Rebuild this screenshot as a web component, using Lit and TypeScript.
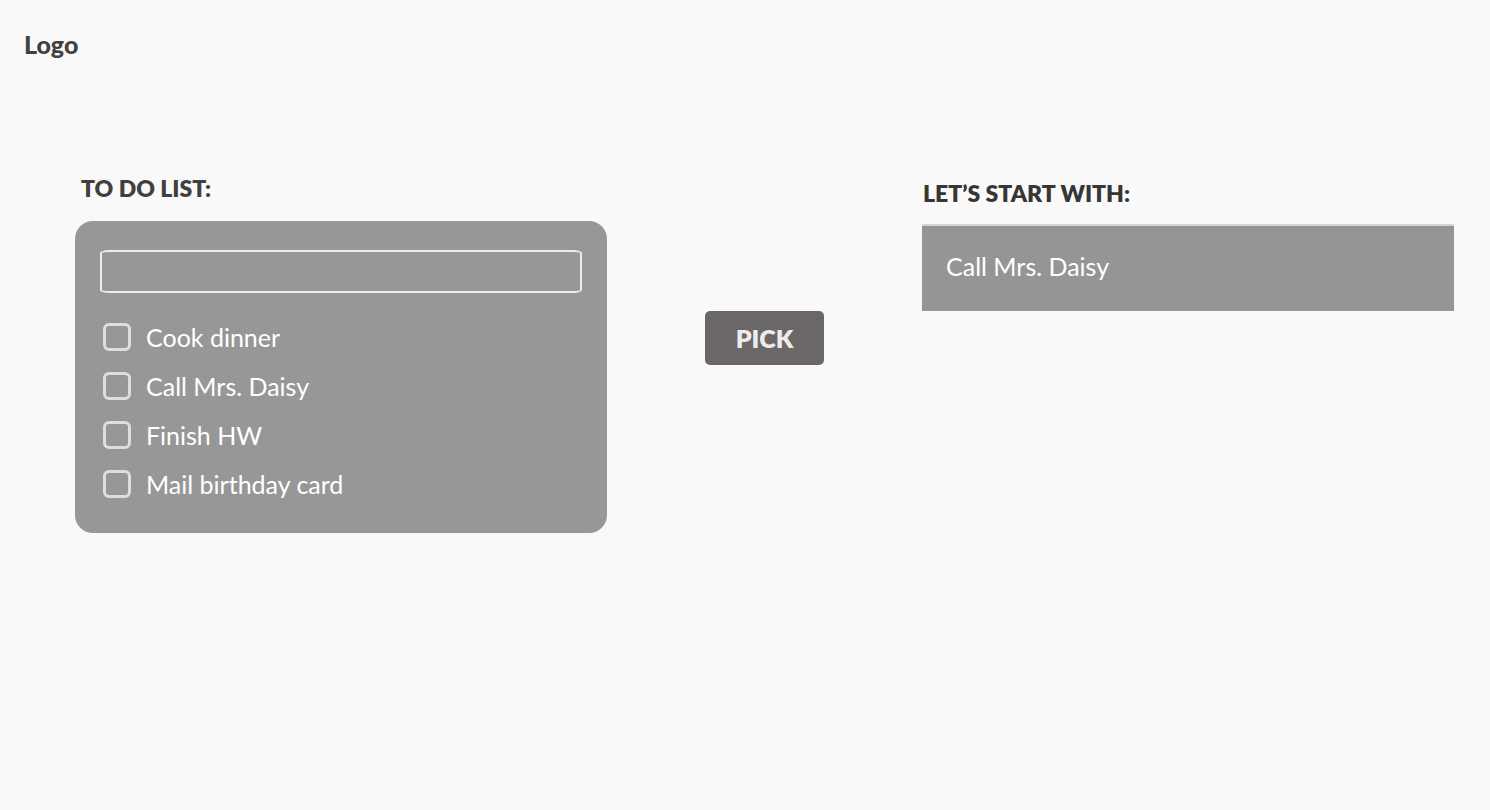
import { LitElement, html, css } from "lit";
import { customElement, state } from "lit/decorators.js";

interface Task {
  id: string;
  title: string;
  done: boolean;
}

@customElement("app-root")
export class AppRoot extends LitElement {
  static styles = css`
    :host {
      display: block;
      box-sizing: border-box;
      min-height: 100vh;
      background: #f9f9f9;
      color: #404041;
      font-family: Lato, "Open Sans", sans-serif;
      font-size: 25px;
      line-height: 30px;
    }
    * {
      box-sizing: border-box;
    }
    .header {
      padding: 29px 24px 0;
    }
    .logo {
      color: inherit;
      font-weight: 900;
      text-decoration: none;
    }
    .main {
      display: grid;
      grid-template-columns: minmax(0, 1fr) auto minmax(0, 1fr);
      align-items: start;
      gap: 98px;
      padding: 114px 36px 40px 75px;
    }
    .heading {
      margin: 0;
      padding-left: 6px;
      font-size: 23px;
      font-weight: 800;
      line-height: 30px;
    }
    .card {
      margin-top: 18px;
      padding: 29px 25px 34px;
      border-radius: 18px;
      background: #979797;
      color: #fff;
    }
    .entry {
      display: block;
      width: 100%;
      height: 43px;
      padding: 0 12px;
      border: 2px solid #ececec;
      border-radius: 9px / 3px;
      background: transparent;
      color: inherit;
      font: inherit;
      outline: none;
    }
    .tasks {
      display: grid;
      gap: 19px;
      margin: 29px 0 0;
      padding: 0 0 0 3px;
      list-style: none;
    }
    .task {
      display: flex;
      align-items: center;
      gap: 15px;
      line-height: 30px;
    }
    .check {
      appearance: none;
      flex: none;
      width: 28px;
      height: 28px;
      margin: 0;
      border: 3px solid #dedede;
      border-radius: 6px;
      background: transparent;
    }
    .check:checked {
      background: #dedede;
    }
    .pick {
      margin-top: 138px;
      padding: 12px 30px;
      min-width: 119px;
      border: 0;
      border-radius: 5px;
      background: #6b6766;
      color: #ececee;
      font: inherit;
      font-weight: 800;
      line-height: 30px;
      cursor: pointer;
    }
    .result {
      padding-top: 5px;
    }
    .result .heading {
      padding-left: 1px;
      color: #363637;
    }
    .choice {
      display: block;
      margin-top: 16px;
      padding: 25px 24px 30px;
      border-top: 2px solid #d5d5d5;
      background: #959595;
      color: #fff;
    }
  `;

  @state() private tasks: Task[] = [
    { id: "task-1", title: "Cook dinner", done: false },
    { id: "task-2", title: "Call Mrs. Daisy", done: false },
    { id: "task-3", title: "Finish HW", done: false },
    { id: "task-4", title: "Mail birthday card", done: false },
  ];

  @state() private choice = "Call Mrs. Daisy";

  private addTask(e: KeyboardEvent) {
    const field = e.target as HTMLInputElement;
    const title = field.value.trim();
    if (e.key !== "Enter" || !title) return;
    this.tasks = [...this.tasks, { id: `task-${this.tasks.length + 1}`, title, done: false }];
    field.value = "";
  }

  private toggle(id: string) {
    this.tasks = this.tasks.map((t) => (t.id === id ? { ...t, done: !t.done } : t));
  }

  private pick() {
    const open = this.tasks.filter((t) => !t.done);
    if (open.length) this.choice = open[Math.floor(Math.random() * open.length)].title;
  }

  render() {
    return html`
      <header class="header"><a class="logo" href="#">Logo</a></header>
      <main class="main">
        <section>
          <h2 class="heading" id="list-heading">TO DO LIST:</h2>
          <div class="card">
            <input class="entry" type="text" aria-labelledby="list-heading" @keydown=${this.addTask} />
            <ul class="tasks">
              ${this.tasks.map(
                (t) => html`<li class="task">
                  <input class="check" type="checkbox" id=${t.id} .checked=${t.done} @change=${() => this.toggle(t.id)} />
                  <label for=${t.id}>${t.title}</label>
                </li>`
              )}
            </ul>
          </div>
        </section>
        <button class="pick" type="button" @click=${this.pick}>PICK</button>
        <section class="result">
          <h2 class="heading">LET’S START WITH:</h2>
          <output class="choice">${this.choice}</output>
        </section>
      </main>
    `;
  }
}
